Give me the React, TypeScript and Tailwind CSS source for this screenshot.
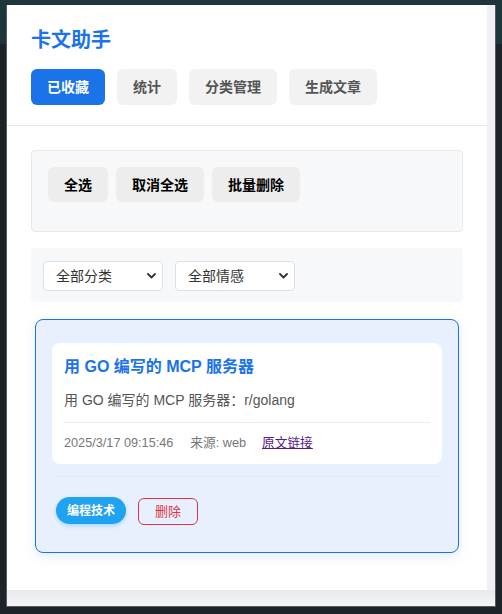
import { useState } from "react";

const tabs = ["已收藏", "统计", "分类管理", "生成文章"];

const Chevron = () => (
  <svg
    className="pointer-events-none absolute right-[7px] top-1/2 -translate-y-1/2"
    width="9"
    height="6"
    viewBox="0 0 9 6"
    fill="none"
  >
    <path d="M1 1l3.5 3.5L8 1" stroke="#333" strokeWidth="1.8" strokeLinecap="round" strokeLinejoin="round" />
  </svg>
);

const Select: React.FC<{ options: string[] }> = ({ options }) => (
  <div className="relative">
    <select className="h-[30px] w-[120px] appearance-none rounded border border-[#dcdfe3] bg-white pl-3 pr-6 text-sm text-[#333] outline-none">
      {options.map((o) => (
        <option key={o}>{o}</option>
      ))}
    </select>
    <Chevron />
  </div>
);

export default function App() {
  const [active, setActive] = useState(0);

  return (
    <div
      className="h-[614px] w-[502px] overflow-hidden bg-[linear-gradient(to_bottom,#1d3639_0,#1d3639_44px,#1e2329_44px)] pt-[5px] pl-[6px]"
      style={{ fontFamily: '"Liberation Sans", "Noto Sans CJK SC", sans-serif' }}
    >
      {/* 弹出窗口 */}
      <div className="flex h-[602px] w-[490px] flex-col border-x border-b border-[#555b62]">
        <div className="flex h-[585px]">
          <div className="w-[480px] overflow-hidden bg-white">
            {/* 头部 */}
            <div className="border-b border-[#e6e6e6] px-6 pt-[21px] pb-5">
              <h1 className="text-xl font-bold leading-7 text-[#1a73e8]">卡文助手</h1>
              <div className="mt-[15px] flex gap-3">
                {tabs.map((t, i) => (
                  <button
                    key={t}
                    onClick={() => setActive(i)}
                    className={`h-9 rounded-md px-4 text-sm font-bold ${
                      active === i ? "bg-[#1a73e8] text-white" : "bg-[#f2f2f2] text-[#555]"
                    }`}
                  >
                    {t}
                  </button>
                ))}
              </div>
            </div>

            <div className="px-6 pt-6">
              {/* 批量操作 */}
              <div className="rounded border border-[#e6e8eb] bg-[#f7f8fa] px-4 pt-4 pb-[29px]">
                <div className="flex gap-2">
                  <button className="h-[35px] rounded-md bg-[#ededed] px-4 text-sm font-bold text-black">全选</button>
                  <button className="h-[35px] rounded-md bg-[#ededed] px-4 text-sm font-bold text-black">取消全选</button>
                  <button className="h-[35px] rounded-md bg-[#ededed] px-4 text-sm font-bold text-black">批量删除</button>
                </div>
              </div>

              {/* 筛选 */}
              <div className="mt-4 flex gap-3 rounded bg-[#f7f8fa] px-3 pt-[13px] pb-[11px]">
                <Select options={["全部分类"]} />
                <Select options={["全部情感"]} />
              </div>

              {/* 收藏卡片 */}
              <div className="mx-1 mt-[17px] rounded-lg border border-[#1a73e8] bg-[#e8f0fd] px-4 pt-[23px] pb-[27px] shadow-[0_4px_12px_rgba(26,115,232,0.12)]">
                <div className="rounded-lg bg-white px-3 pt-3 pb-3">
                  <div className="text-base font-bold leading-6 text-[#1a73e8]">用 GO 编写的 MCP 服务器</div>
                  <p className="mt-[11px] mb-3 text-sm leading-5 text-[#555]">用 GO 编写的 MCP 服务器：r/golang</p>
                  <div className="flex items-center border-t border-[#eeeeee] pt-[11px] text-[12.7px] leading-[18px] text-[#777]">
                    <span>2025/3/17 09:15:46</span>
                    <span className="ml-[17px]">来源: web</span>
                    <a href="#" className="ml-4 text-[#551a8b] underline">
                      原文链接
                    </a>
                  </div>
                </div>
                <div className="mt-3 flex items-center gap-3 border-t border-[#e2eaf6] pt-[19px] pl-1">
                  <span className="flex h-[27px] items-center rounded-full bg-[#1fa2f0] px-[11px] text-xs font-bold text-white shadow-[0_2px_4px_rgba(31,162,240,0.3)]">
                    编程技术
                  </span>
                  <button className="mt-[2px] h-[27px] rounded-md border border-[#dc3545] px-4 text-[13px] text-[#dc3545]">
                    删除
                  </button>
                </div>
              </div>
            </div>
          </div>
          {/* 滚动条轨道 */}
          <div className="w-2 bg-[#f0f0f2]" />
        </div>
        <div className="h-4 bg-[linear-gradient(to_bottom,#e8e9eb,#f5f6f7)]" />
      </div>
    </div>
  );
}
